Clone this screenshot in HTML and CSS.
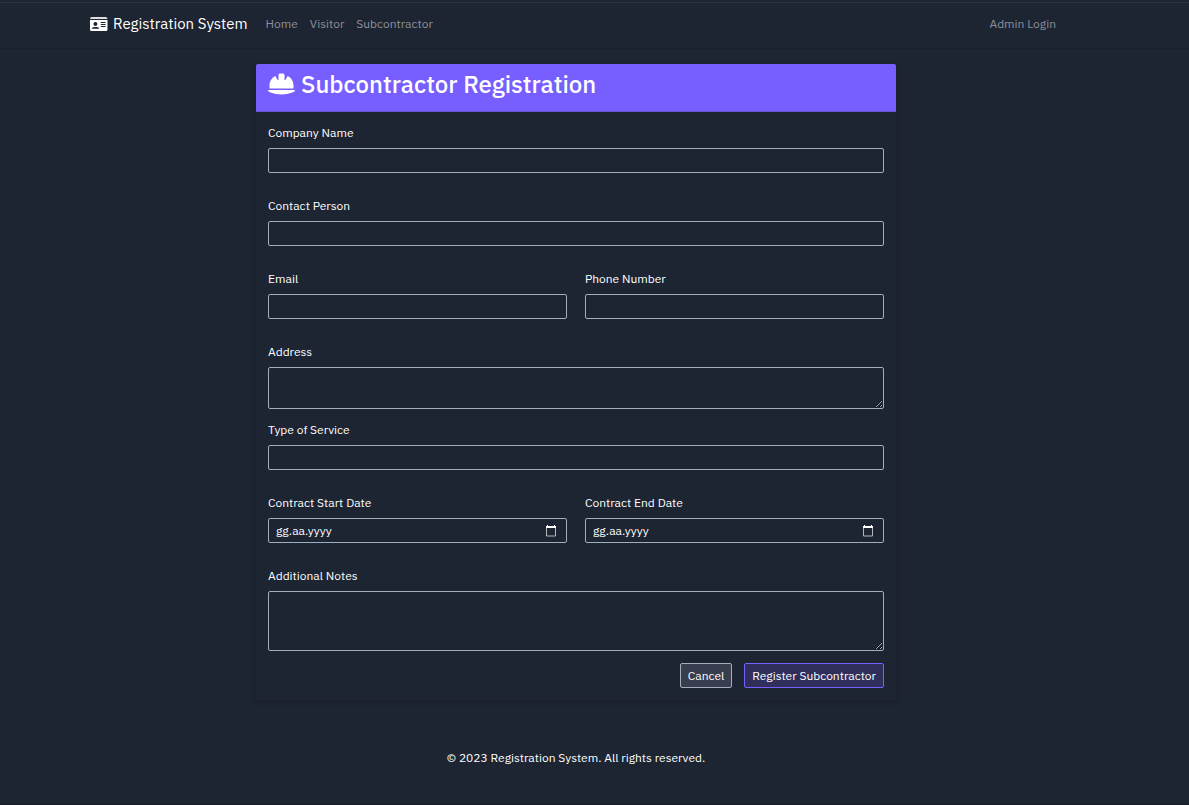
FILE: index.html
```html
<!DOCTYPE html>
<html lang="en">
<head>
<meta charset="utf-8">
<meta name="viewport" content="width=device-width, initial-scale=1">
<title>Subcontractor Registration</title>
<link rel="stylesheet" href="styles.css">
</head>
<body>
<header class="navbar">
  <nav class="container nav">
    <a class="brand" href="#">
      <svg class="brand-icon" viewBox="0 0 18 14" aria-hidden="true"><path opacity=".85" d="M0 2a2 2 0 0 1 2-2h13.500a2 2 0 0 1 2 2z"/><path fill-rule="evenodd" d="M0 3h17.500v9.500a1.500 1.500 0 0 1-1.500 1.500H1.500A1.500 1.500 0 0 1 0 12.500zM5.400 5a2 2 0 1 0 0 4 2 2 0 0 0 0-4zM2 11.700h7c0-1.100-.8-1.800-1.800-1.800H3.800c-1 0-1.800.7-1.800 1.800zM10.800 5v1h4.700V5zm0 2v1h4.700V7zm0 2v1h4.700V9z"/></svg>
      <span>Registration System</span>
    </a>
    <a class="nav-link" href="#">Home</a>
    <a class="nav-link" href="#">Visitor</a>
    <a class="nav-link" href="#">Subcontractor</a>
    <a class="nav-link nav-end" href="#">Admin Login</a>
  </nav>
</header>
<main class="container">
  <section class="card">
    <div class="card-header">
      <svg class="title-icon" viewBox="0 0 576 512" aria-hidden="true"><path d="M256 32c-17.700 0-32 14.300-32 32v2.300 99.600c0 5.600-4.500 10.100-10.100 10.100c-3.600 0-7-1.900-8.800-5.100L157.100 87C83 123.500 32 199.800 32 288v64H544l0-66.400c-.9-87.200-51.700-162.400-125.100-198.600l-48 83.900c-1.800 3.200-5.200 5.100-8.800 5.100c-5.600 0-10.100-4.500-10.100-10.100V66.300 64c0-17.700-14.300-32-32-32H256zM16.600 384C7.400 384 0 391.400 0 400.600c0 4.700 2 9.200 5.800 11.900C27.500 428.400 111.800 480 288 480s260.500-51.600 282.200-67.500c3.800-2.800 5.800-7.200 5.800-11.900c0-9.200-7.400-16.600-16.600-16.600H16.600z"/></svg>
      <h1 class="title">Subcontractor Registration</h1>
    </div>
    <form class="form">
      <div class="field"><label for="company">Company Name</label><input class="control" id="company" type="text"></div>
      <div class="field"><label for="contact">Contact Person</label><input class="control" id="contact" type="text"></div>
      <div class="row">
        <div class="field"><label for="email">Email</label><input class="control" id="email" type="email"></div>
        <div class="field"><label for="phone">Phone Number</label><input class="control" id="phone" type="tel"></div>
      </div>
      <div class="field field-area"><label for="address">Address</label><textarea class="control area-short" id="address"></textarea></div>
      <div class="field"><label for="service">Type of Service</label><input class="control" id="service" type="text"></div>
      <div class="row">
        <div class="field"><label for="start">Contract Start Date</label>
          <div class="control date"><input class="date-input" id="start" type="text" placeholder="gg.aa.yyyy"><button class="date-button" type="button" aria-label="Choose start date"><svg class="date-icon" viewBox="0 0 12 12" aria-hidden="true"><path class="date-frame" d="M1.500 2.500h9v8.500h-9z"/><path d="M1 1h10v2H1zM2 0h1v1H2zM9 0h1v1H9z"/></svg></button></div>
        </div>
        <div class="field"><label for="end">Contract End Date</label>
          <div class="control date"><input class="date-input" id="end" type="text" placeholder="gg.aa.yyyy"><button class="date-button" type="button" aria-label="Choose end date"><svg class="date-icon" viewBox="0 0 12 12" aria-hidden="true"><path class="date-frame" d="M1.500 2.500h9v8.500h-9z"/><path d="M1 1h10v2H1zM2 0h1v1H2zM9 0h1v1H9z"/></svg></button></div>
        </div>
      </div>
      <div class="field field-area"><label for="notes">Additional Notes</label><textarea class="control area-tall" id="notes"></textarea></div>
      <div class="actions">
        <button class="button" type="button">Cancel</button>
        <button class="button button-primary" type="submit">Register Subcontractor</button>
      </div>
    </form>
  </section>
</main>
<footer class="footer">© 2023 Registration System. All rights reserved.</footer>
</body>
</html>
```

FILE: styles.css
```css
* { box-sizing: border-box; }
body {
  margin: 0;
  min-height: 100vh;
  border-bottom: 1px solid #181c28;
  background: #1d2432;
  color: #fff;
  font: 400 12px/18px "IBM Plex Sans", Inter, sans-serif;
  color-scheme: dark;
}
.navbar {
  margin-top: 2px;
  padding: 0 37px 0 0;
  border-top: 1px solid #2d3343;
  border-bottom: 1px solid #1b202e;
}
.container { max-width: 972px; margin: 0 auto; }
.nav { display: flex; align-items: center; min-height: 45px; padding-bottom: 3px; }
.brand { display: flex; align-items: center; gap: 5px; margin-right: 12px; color: #fff; font-size: 15px; text-decoration: none; }
.brand-icon { width: 18px; height: 14px; fill: currentColor; }
.nav-link { padding: 6px; color: #8e919a; text-decoration: none; }
.nav-end { margin-left: auto; }
main.container { max-width: none; padding: 15px 37px 0 0; }
.card { max-width: 640px; margin: 0 auto; border-radius: 2px; box-shadow: 0 2px 6px rgba(0, 0, 0, .15); }
.card-header {
  display: flex;
  gap: 6px;
  height: 48px;
  padding: 6px 12px;
  background: #765eff;
  border-bottom: 1px solid #6653d5;
  border-radius: 2px 2px 0 0;
}
.title-icon { width: 27px; height: 24px; margin-top: 2px; fill: currentColor; }
.title { margin: 0; font-size: 24px; line-height: 28px; font-weight: 500; }
.form { padding: 12px; }
.field { display: flex; flex-direction: column; gap: 6px; margin-bottom: 24px; }
.field-area { margin-bottom: 12px; }
.row { display: grid; grid-template-columns: 1fr 1fr; gap: 18px; }
.control {
  width: 100%;
  height: 25px;
  padding: 0 7px;
  border: 1px solid #a0aec0;
  border-radius: 2px;
  background: transparent;
  color: #fff;
  font: inherit;
}
.area-short { height: 42px; }
.area-tall { height: 60px; }
.date { display: flex; align-items: center; padding-right: 9px; }
.date-input { flex: 1; min-width: 0; padding: 0; border: 0; outline: 0; background: transparent; color: #fff; font: inherit; }
.date-input::placeholder { color: #fff; opacity: 1; }
.date-button { display: flex; padding: 0; border: 0; background: transparent; color: #fff; }
.date-icon { width: 12px; height: 12px; fill: currentColor; }
.date-frame { fill: none; stroke: #b4b6bb; }
.actions { display: flex; justify-content: flex-end; gap: 12px; }
.button {
  height: 25px;
  padding: 0 7px;
  border: 1px solid #a0aec0;
  border-radius: 2px;
  background: #383e4e;
  color: #fff;
  font: inherit;
}
.button-primary { border-color: #765eff; background: #302f5c; }
.footer { padding: 49px 37px 36px 0; text-align: center; }
```
